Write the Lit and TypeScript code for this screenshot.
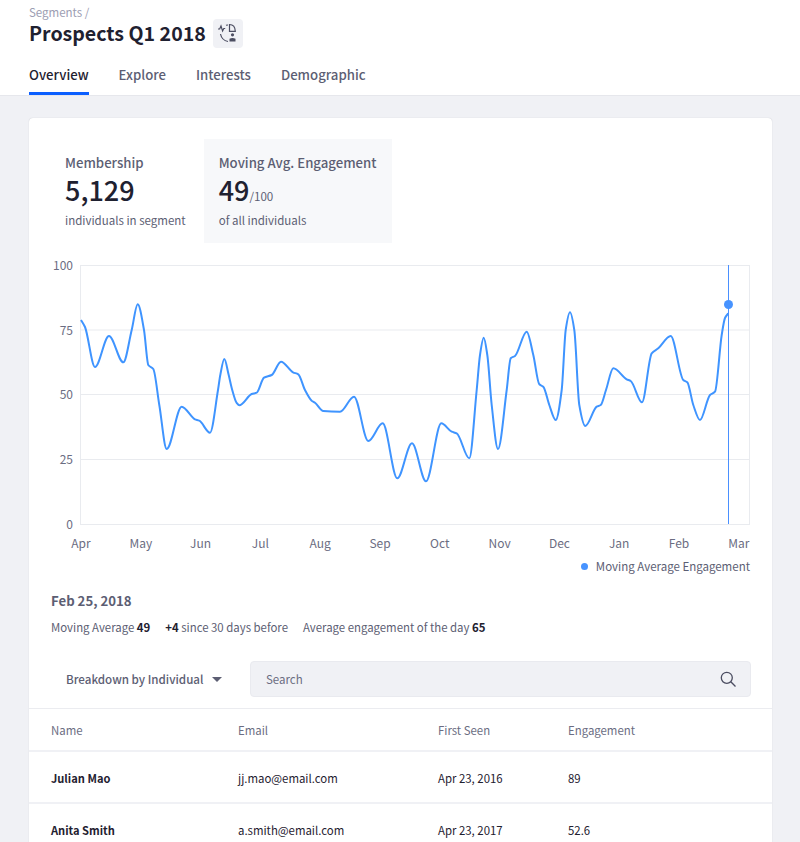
import { LitElement, html, svg, css } from 'lit';
import { customElement } from 'lit/decorators.js';

// curve traced from the reference, in page coordinates
const POINTS: [number, number][] = [
  [81, 320], [85, 327], [95, 367], [109, 336], [123.3, 362.3], [131.7, 330], [137.7, 304.3],
  [144, 330], [148.3, 365], [153.3, 369], [159.3, 405], [166.7, 449], [181.7, 406.7],
  [195, 419.3], [199.3, 420.7], [210, 432.7], [218, 390], [220.3, 375], [224.3, 359],
  [228.7, 375], [231.7, 388], [236.7, 403], [239.3, 405.3], [251.7, 394], [256.7, 392.7], [264, 377.7],
  [271.7, 375], [281, 361.7], [293, 372.3], [298.3, 374.3], [305, 390],
  [311.7, 400.7], [315, 402.7], [323.3, 411], [340, 411.7], [354, 396.7],
  [368.3, 441], [382.7, 423.3], [397.3, 478.3], [412, 443.3], [426, 481.3],
  [441.3, 423.3], [451.7, 431.7], [456.7, 433.3], [469.3, 458.3], [476.7, 390],
  [480, 355], [483.7, 337.7], [487.3, 355], [491.7, 405], [498, 449], [506.7, 390], [510.7, 358.3],
  [515, 356], [526.7, 331.7], [533.3, 355], [539.3, 384.3], [543.3, 386.7],
  [549.3, 405], [555.7, 420], [561.7, 390], [565.7, 330], [570, 312.3], [574.3, 330], [579.3, 405],
  [585.3, 426], [596.7, 406.7], [600.7, 405], [606, 390], [613.3, 368.3],
  [626.7, 379.3], [630.7, 381], [642, 402.3], [651.7, 353.3], [658.3, 348.3],
  [670.7, 336], [683.3, 380], [687.3, 382.3], [693.3, 405], [700, 420],
  [710, 395], [715, 391.7], [721.7, 335], [725, 318], [728.3, 313.3],
];

const MONTHS = ['Apr', 'May', 'Jun', 'Jul', 'Aug', 'Sep', 'Oct', 'Nov', 'Dec', 'Jan', 'Feb', 'Mar'];
const TICKS: [string, number][] = [['100', 265.5], ['75', 330], ['50', 394.5], ['25', 459.5], ['0', 524.5]];

const ROWS = [
  { name: 'Julian Mao', email: 'jj.mao@email.com', seen: 'Apr 23, 2016', engagement: '89' },
  { name: 'Anita Smith', email: 'a.smith@email.com', seen: 'Apr 23, 2017', engagement: '52.6' },
];

// monotone cubic through the points: flat tangents at peaks and troughs
function smoothPath(pts: [number, number][]) {
  const n = pts.length;
  const slopes: number[] = [];
  for (let i = 0; i < n - 1; i++) {
    slopes.push((pts[i + 1][1] - pts[i][1]) / (pts[i + 1][0] - pts[i][0]));
  }
  const tangents = pts.map((_, i) => {
    if (i === 0) return slopes[0];
    if (i === n - 1) return slopes[n - 2];
    const s0 = slopes[i - 1];
    const s1 = slopes[i];
    if (s0 * s1 <= 0) return 0;
    const h0 = pts[i][0] - pts[i - 1][0];
    const h1 = pts[i + 1][0] - pts[i][0];
    return (3 * (h0 + h1)) / ((2 * h1 + h0) / s0 + (h1 + 2 * h0) / s1);
  });
  let d = `M${pts[0][0]} ${pts[0][1]}`;
  for (let i = 0; i < n - 1; i++) {
    const h = (pts[i + 1][0] - pts[i][0]) / 3;
    const c1x = pts[i][0] + h;
    const c1y = pts[i][1] + tangents[i] * h;
    const c2x = pts[i + 1][0] - h;
    const c2y = pts[i + 1][1] - tangents[i + 1] * h;
    d += `C${c1x.toFixed(1)} ${c1y.toFixed(1)} ${c2x.toFixed(1)} ${c2y.toFixed(1)} ${pts[i + 1][0]} ${pts[i + 1][1]}`;
  }
  return d;
}

@customElement('app-root')
export class AppRoot extends LitElement {
  static styles = css`
    :host {
      display: block;
      height: 842px;
      overflow: hidden;
      background: #f0f1f5;
      color: #5c5e73;
      font-family: 'Noto Sans CJK SC', 'Noto Sans', sans-serif;
    }

    .header {
      box-sizing: border-box;
      height: 96px;
      padding: 5px 29px 0;
      background: #fff;
      border-bottom: 1px solid #e6e7ec;
    }

    .crumb {
      font-size: 11.5px;
      line-height: 14px;
      color: #9c9db2;
    }

    .title-row {
      display: flex;
      align-items: center;
      gap: 7px;
      height: 28px;
    }

    h1 {
      margin: 0;
      font-size: 19.6px;
      line-height: 28px;
      font-weight: 700;
      color: #1f2130;
    }

    .icon-btn {
      display: flex;
      align-items: center;
      justify-content: center;
      width: 30px;
      height: 29px;
      border-radius: 4px;
      background: #f0f1f5;
    }

    .tabs {
      display: flex;
      gap: 30px;
      margin-top: 12px;
    }

    .tab {
      height: 36px;
      box-sizing: border-box;
      padding-top: 6px;
      font-size: 13.2px;
      line-height: 20px;
      font-weight: 500;
    }

    .tab.active {
      color: #1f2130;
      border-bottom: 3px solid #0b5fff;
    }

    .card {
      box-sizing: border-box;
      width: 743px;
      margin: 22px 0 0 29px;
      padding-top: 21px;
      background: #fff;
      border-radius: 4px;
      box-shadow: 0 0 1px rgba(40, 42, 60, 0.25);
    }

    .stats {
      display: flex;
      gap: 3px;
      margin-left: 21px;
      height: 104px;
    }

    .stat {
      box-sizing: border-box;
      padding: 14px 15px 0 15px;
    }

    .stat.selected {
      background: #f7f8fa;
    }

    .stat-label {
      font-size: 13.2px;
      line-height: 20px;
      font-weight: 500;
    }

    .stat-value {
      font-size: 27px;
      line-height: 34px;
      font-weight: 500;
      color: #1f2130;
    }

    .stat-value small {
      font-size: 11.6px;
      line-height: 0;
      font-weight: 400;
      color: #5c5e73;
    }

    .stat-sub {
      margin-top: 3px;
      font-size: 11.5px;
      line-height: 20px;
    }

    .chart {
      display: block;
      margin-top: 12px;
    }

    .axis {
      font-size: 12px;
      fill: #6b6d82;
    }

    .legend {
      display: flex;
      justify-content: flex-end;
      align-items: center;
      gap: 8px;
      padding-right: 22px;
      font-size: 11.5px;
      line-height: 20px;
    }

    .legend i {
      width: 7px;
      height: 7px;
      border-radius: 50%;
      background: #4793ff;
    }

    .day {
      padding: 15px 22px 0;
    }

    .day h2 {
      margin: 0;
      font-size: 13.2px;
      line-height: 20px;
      font-weight: 700;
    }

    .day-stats {
      display: flex;
      gap: 15px;
      margin-top: 6px;
      font-size: 11.4px;
      line-height: 20px;
    }

    .day-stats b {
      font-weight: 700;
      color: #1f2130;
    }

    .filter {
      display: flex;
      align-items: center;
      height: 36px;
      margin-top: 24px;
      padding: 0 21px 0 37px;
    }

    .dropdown {
      display: flex;
      align-items: center;
      gap: 9px;
      width: 184px;
      font-size: 11.6px;
      font-weight: 500;
      white-space: nowrap;
    }

    .caret {
      width: 0;
      height: 0;
      border-left: 5px solid transparent;
      border-right: 5px solid transparent;
      border-top: 5px solid #5c5e73;
    }

    .search {
      flex: 1;
      display: flex;
      align-items: center;
      justify-content: space-between;
      box-sizing: border-box;
      height: 36px;
      padding: 0 14px 0 15px;
      border-radius: 4px;
      border: 1px solid #e9eaef;
      background: #f0f1f5;
      font-size: 11.5px;
      color: #6b6d82;
    }

    .table {
      margin-top: 11px;
      font-size: 11.4px;
    }

    .row {
      display: grid;
      grid-template-columns: 187px 200px 130px 1fr;
      align-items: center;
      height: 49px;
      padding: 1px 0 0 22px;
      border-top: 2px solid #f0f1f5;
      color: #1f2130;
    }

    .row.head {
      height: 41px;
      padding-top: 0;
      border-top: 1px solid #ebecf0;
      color: #6b6d82;
    }

    .row .name {
      font-size: 11.1px;
      font-weight: 700;
    }
  `;

  private renderChart() {
    return html`
      <svg class="chart" width="743" height="301" viewBox="29 255 743 301">
        ${TICKS.map(
          ([, y]) => svg`<line x1="80" x2="750" y1=${y} y2=${y} stroke="#e9ebef" stroke-width="1"></line>`
        )}
        <line x1="80.5" x2="80.5" y1="265" y2="525" stroke="#e9ebef"></line>
        <line x1="749.5" x2="749.5" y1="265" y2="525" stroke="#e9ebef"></line>
        ${TICKS.map(
          ([label, y]) => svg`<text class="axis" x="73" y=${y + 4.5} text-anchor="end">${label}</text>`
        )}
        ${MONTHS.map(
          (m, i) => svg`<text class="axis" x=${81 + i * 59.8} y="548" text-anchor="middle">${m}</text>`
        )}
        <path d=${smoothPath(POINTS)} fill="none" stroke="#3f94ff" stroke-width="2"></path>
        <line x1="728.5" x2="728.5" y1="265" y2="524" stroke="#4a90ff"></line>
        <circle cx="728.5" cy="304.5" r="4.5" fill="#4793ff"></circle>
      </svg>
    `;
  }

  render() {
    return html`
      <div class="header">
        <div class="crumb">Segments /</div>
        <div class="title-row">
          <h1>Prospects Q1 2018</h1>
          <div class="icon-btn">
            <svg width="22" height="22" viewBox="0 0 22 22" fill="none" stroke="#4b4d61" stroke-width="1.2">
              <path d="M1 7h1.700l1.300-3 1.600 5 1.200-2.500h1.400"></path>
              <path d="M3.500 12c.8 3.800 3.400 6.800 7.500 7.500"></path>
              <path d="M9 3.300c.8-.3 1.300-.3 2-.3"></path>
              <path d="M12.500 2.500c3.300 0 5.600 2.500 5.800 6.800h-5.800z"></path>
              <circle cx="15.500" cy="12.800" r="1.600" fill="#4b4d61" stroke="none"></circle>
              <path d="M12.500 19.500v-2.800c1.900-1 4.100-1 6 0v2.800z" fill="#4b4d61" stroke="none"></path>
            </svg>
          </div>
        </div>
        <div class="tabs">
          <div class="tab active">Overview</div>
          <div class="tab">Explore</div>
          <div class="tab">Interests</div>
          <div class="tab">Demographic</div>
        </div>
      </div>

      <div class="card">
        <div class="stats">
          <div class="stat">
            <div class="stat-label">Membership</div>
            <div class="stat-value">5,129</div>
            <div class="stat-sub">individuals in segment</div>
          </div>
          <div class="stat selected">
            <div class="stat-label">Moving Avg. Engagement</div>
            <div class="stat-value">49<small>/100</small></div>
            <div class="stat-sub">of all individuals</div>
          </div>
        </div>

        ${this.renderChart()}

        <div class="legend"><i></i>Moving Average Engagement</div>

        <div class="day">
          <h2>Feb 25, 2018</h2>
          <div class="day-stats">
            <span>Moving Average <b>49</b></span>
            <span><b>+4</b> since 30 days before</span>
            <span>Average engagement of the day <b>65</b></span>
          </div>
        </div>

        <div class="filter">
          <div class="dropdown">Breakdown by Individual <span class="caret"></span></div>
          <div class="search">
            Search
            <svg width="16" height="16" viewBox="0 0 16 16" fill="none" stroke="#4b4d61" stroke-width="1.3">
              <circle cx="6.800" cy="6.800" r="5.500"></circle>
              <path d="M10.800 10.800l4.700 4.700"></path>
            </svg>
          </div>
        </div>

        <div class="table">
          <div class="row head">
            <span>Name</span><span>Email</span><span>First Seen</span><span>Engagement</span>
          </div>
          ${ROWS.map(
            r => html`
              <div class="row">
                <span class="name">${r.name}</span>
                <span>${r.email}</span>
                <span>${r.seen}</span>
                <span>${r.engagement}</span>
              </div>
            `
          )}
        </div>
      </div>
    `;
  }
}

declare global {
  interface HTMLElementTagNameMap {
    'app-root': AppRoot;
  }
}
